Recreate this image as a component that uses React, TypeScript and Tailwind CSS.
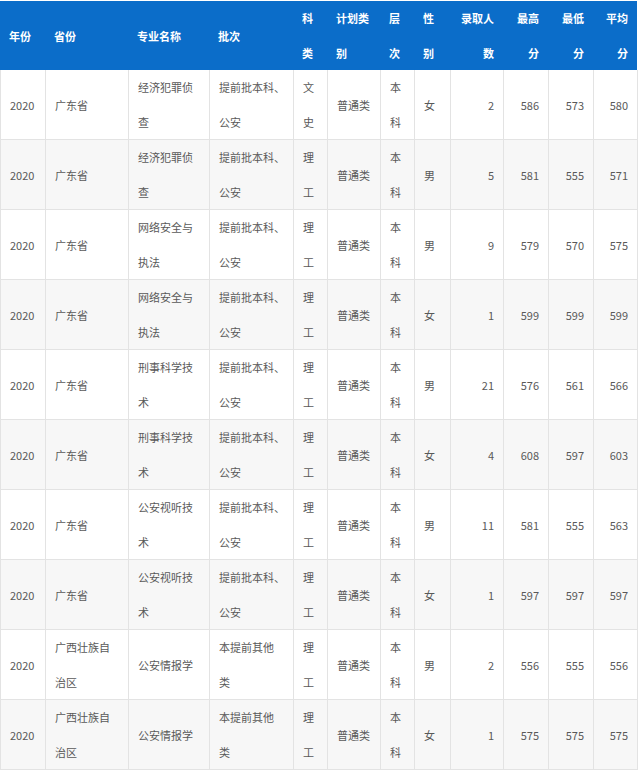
import React from "react";

type Row = {
  year: string;
  prov: string[];
  major: string[];
  batch: string[];
  subject: string[];
  plan: string;
  level: string[];
  sex: string;
  count: string;
  max: string;
  min: string;
  avg: string;
};

const cols =
  "grid grid-cols-[45px_83px_81px_84px_34px_53px_34px_36px_53px_45px_45px_44px]";

const gd = ["广东省"];
const gx = ["广西壮族自", "治区"];
const tq = ["提前批本科、", "公安"];
const bt = ["本提前其他", "类"];
const lg = ["理", "工"];
const bk = ["本", "科"];

const rows: Row[] = [
  { year: "2020", prov: gd, major: ["经济犯罪侦", "查"], batch: tq, subject: ["文", "史"], plan: "普通类", level: bk, sex: "女", count: "2", max: "586", min: "573", avg: "580" },
  { year: "2020", prov: gd, major: ["经济犯罪侦", "查"], batch: tq, subject: lg, plan: "普通类", level: bk, sex: "男", count: "5", max: "581", min: "555", avg: "571" },
  { year: "2020", prov: gd, major: ["网络安全与", "执法"], batch: tq, subject: lg, plan: "普通类", level: bk, sex: "男", count: "9", max: "579", min: "570", avg: "575" },
  { year: "2020", prov: gd, major: ["网络安全与", "执法"], batch: tq, subject: lg, plan: "普通类", level: bk, sex: "女", count: "1", max: "599", min: "599", avg: "599" },
  { year: "2020", prov: gd, major: ["刑事科学技", "术"], batch: tq, subject: lg, plan: "普通类", level: bk, sex: "男", count: "21", max: "576", min: "561", avg: "566" },
  { year: "2020", prov: gd, major: ["刑事科学技", "术"], batch: tq, subject: lg, plan: "普通类", level: bk, sex: "女", count: "4", max: "608", min: "597", avg: "603" },
  { year: "2020", prov: gd, major: ["公安视听技", "术"], batch: tq, subject: lg, plan: "普通类", level: bk, sex: "男", count: "11", max: "581", min: "555", avg: "563" },
  { year: "2020", prov: gd, major: ["公安视听技", "术"], batch: tq, subject: lg, plan: "普通类", level: bk, sex: "女", count: "1", max: "597", min: "597", avg: "597" },
  { year: "2020", prov: gx, major: ["公安情报学"], batch: bt, subject: lg, plan: "普通类", level: bk, sex: "男", count: "2", max: "556", min: "555", avg: "556" },
  { year: "2020", prov: gx, major: ["公安情报学"], batch: bt, subject: lg, plan: "普通类", level: bk, sex: "女", count: "1", max: "575", min: "575", avg: "575" },
];

const headers: { lines: string[]; right?: boolean }[] = [
  { lines: ["年份"] },
  { lines: ["省份"] },
  { lines: ["专业名称"] },
  { lines: ["批次"] },
  { lines: ["科", "类"] },
  { lines: ["计划类", "别"] },
  { lines: ["层", "次"] },
  { lines: ["性", "别"] },
  { lines: ["录取人", "数"], right: true },
  { lines: ["最高", "分"], right: true },
  { lines: ["最低", "分"], right: true },
  { lines: ["平均", "分"], right: true },
];

function Cell({ lines, right }: { lines: string[]; right?: boolean }) {
  return (
    <div
      className={`flex flex-col justify-center border-r border-[#e3e3e3] px-[9px] whitespace-nowrap ${
        right ? "items-end" : "items-start"
      }`}
    >
      {lines.map((l, i) => (
        <span key={i} className="leading-[35px]">
          {l}
        </span>
      ))}
    </div>
  );
}

export default function App() {
  return (
    <div
      className="w-[640px] h-[773px] bg-white overflow-hidden text-[11px]"
      style={{ fontFamily: '"Noto Sans CJK SC", "Noto Sans", sans-serif' }}
    >
      <div className="w-[637px] pt-px">
        {/* 表头 */}
        <div className={`${cols} h-[69px] bg-[#0b6dc9] text-white font-bold`}>
          {headers.map((h, i) => (
            <div
              key={i}
              className={`flex flex-col justify-center px-[9px] whitespace-nowrap ${
                h.right ? "items-end" : "items-start"
              }`}
            >
              {h.lines.map((l, j) => (
                <span key={j} className="leading-[35px]">
                  {l}
                </span>
              ))}
            </div>
          ))}
        </div>

        {/* 数据 */}
        <div className="border-l border-[#e3e3e3] text-[#595959]">
          {rows.map((r, i) => (
            <div
              key={i}
              className={`${cols} h-[70px] border-b border-[#e3e3e3] ${
                i % 2 === 1 ? "bg-[#f7f7f7]" : "bg-white"
              }`}
            >
              <Cell lines={[r.year]} />
              <Cell lines={r.prov} />
              <Cell lines={r.major} />
              <Cell lines={r.batch} />
              <Cell lines={r.subject} />
              <Cell lines={[r.plan]} />
              <Cell lines={r.level} />
              <Cell lines={[r.sex]} />
              <Cell lines={[r.count]} right />
              <Cell lines={[r.max]} right />
              <Cell lines={[r.min]} right />
              <Cell lines={[r.avg]} right />
            </div>
          ))}
        </div>
      </div>
    </div>
  );
}
